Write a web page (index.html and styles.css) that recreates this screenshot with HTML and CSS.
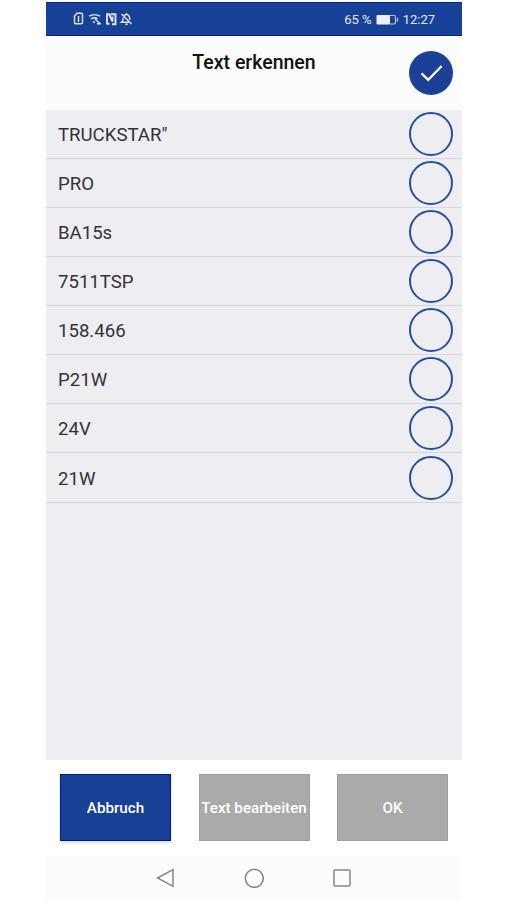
FILE: index.html
```
<!DOCTYPE html>
<html lang="de">
<head>
    <meta charset="UTF-8">
    <meta name="viewport" content="width=device-width, initial-scale=1.0">
    <title>Text erkennen</title>
    <link rel="stylesheet" href="styles.css">
</head>
<body>
    <div class="phone">
        <!-- Status Bar -->
        <div class="status-bar">
            <div class="status-icons">
                <svg width="60" height="14" viewBox="0 0 60 14" fill="none" stroke="#dde5fa" stroke-width="1.4">
                    <path d="M4 1.200h4.200q1.300 0 1.300 1.300v8q0 1.300-1.300 1.300H2.800Q1.500 11.800 1.500 10.500V4zM5.500 4v6"/>
                    <path d="M16 4.200q5.500-3.200 11 0M18 6.800q3.500-2.200 6.500 0M20 9.200l1.700 1.600M22 7l5.500 5M24 11.800h4"/>
                    <path d="M34 12.300V2.200h2L39.500 9.500V4.500M37.500 2.300h5v10h-3.500M33.500 11.800h3" stroke-width="1.900"/>
                    <path d="M48.500 2l10 10M51 3.500q3-2.200 5 .5.800 1.200.8 4M50.500 5.500Q50 9 48.500 10.300h7.500M52.300 12.300h2.400M53.500 1v1.500"/>
                </svg>
            </div>
            <div class="status-info">
                <span>65 %</span>
                <svg width="23" height="12" viewBox="0 0 23 12">
                    <rect x="0.500" y="1" width="13.500" height="9.500" rx="1" fill="#eef1fb"/>
                    <path d="M14 1.500h4q1.500 0 1.500 1.500v5.500q0 1.500-1.500 1.500h-4M21.500 4v3.500" fill="none" stroke="#b9c8ef" stroke-width="1.200"/>
                </svg>
                <span>12:27</span>
            </div>
        </div>

        <!-- Header -->
        <div class="header">
            <h1>Text erkennen</h1>
            <button class="select-all">
                <svg width="44" height="44" viewBox="0 0 44 44">
                    <path d="M12.500 22.300l6.700 6.500 13.500-13.800" fill="none" stroke="#fff" stroke-width="2.300"/>
                </svg>
            </button>
        </div>

        <!-- Recognized Text -->
        <ul class="list">
            <li><span>TRUCKSTAR"</span><i class="circle"></i></li>
            <li><span>PRO</span><i class="circle"></i></li>
            <li><span>BA15s</span><i class="circle"></i></li>
            <li><span>7511TSP</span><i class="circle"></i></li>
            <li><span>158.466</span><i class="circle"></i></li>
            <li><span>P21W</span><i class="circle"></i></li>
            <li><span>24V</span><i class="circle"></i></li>
            <li><span>21W</span><i class="circle"></i></li>
        </ul>

        <!-- Buttons -->
        <div class="actions">
            <button class="btn btn-primary">Abbruch</button>
            <button class="btn">Text bearbeiten</button>
            <button class="btn">OK</button>
        </div>

        <!-- Android Navigation -->
        <div class="nav-bar">
            <svg width="20" height="20" viewBox="0 0 20 20"><path d="M1.500 10L17 1.700v16.600z"/></svg>
            <svg width="20" height="20" viewBox="0 0 20 20"><circle cx="10.300" cy="10.300" r="9"/></svg>
            <svg width="20" height="20" viewBox="0 0 20 20"><rect x="2" y="2" width="16" height="16" rx="1"/></svg>
        </div>
    </div>
</body>
</html>
```
FILE: styles.css
```
/* Global Styles */
body {
    margin: 0;
    background-color: #fff;
    font-family: Roboto, sans-serif;
}

svg {
    display: block;
}

.phone {
    width: 416px;
    height: 900px;
    margin: 0 44px 0 46px;
    box-sizing: border-box;
    padding-top: 2px;
    display: flex;
    flex-direction: column;
}

/* Status Bar */
.status-bar {
    height: 33.5px;
    flex: none;
    box-sizing: border-box;
    padding: 0 27px 0 27px;
    border: solid #0c2486;
    border-width: 1px 0;
    background-color: #174196;
    color: #e4eafa;
    display: flex;
    align-items: center;
    justify-content: space-between;
    font-size: 13px;
}

.status-info {
    display: flex;
    align-items: center;
    gap: 4px;
    padding-top: 2px;
}

/* Header */
.header {
    height: 74px;
    flex: none;
    background-color: #fcfcfc;
    display: grid;
    grid-template-columns: 1fr auto 1fr;
}

.header h1 {
    grid-column: 2;
    margin: 15px 0 0;
    font-size: 19.5px;
    line-height: 24px;
    font-weight: 500;
    color: #111;
}

.select-all {
    justify-self: end;
    width: 44px;
    height: 44px;
    margin: 15px 9px 0 0;
    padding: 0;
    border: none;
    border-radius: 50%;
    background-color: #1c3f97;
}

/* List */
.list {
    flex: 1;
    margin: 0;
    padding: 0;
    list-style: none;
    background-color: #eeedf2;
}

.list li {
    height: 49.15px;
    box-sizing: border-box;
    padding: 0 9px 0 12px;
    border-bottom: 1px solid #d6d6db;
    display: flex;
    align-items: center;
    justify-content: space-between;
    font-size: 18.6px;
    color: #333;
}

.list span {
    padding-top: 2px;
}

.circle {
    width: 44px;
    height: 44px;
    box-sizing: border-box;
    border: 2px solid #2450a0;
    border-radius: 50%;
}

/* Buttons */
.actions {
    height: 96px;
    flex: none;
    box-sizing: border-box;
    padding: 14px 14px 15px;
    display: flex;
    justify-content: space-between;
}

.btn {
    width: 111px;
    height: 67px;
    padding: 0;
    border: 1px solid #9f9f9f;
    background-color: #aaa;
    color: #fff;
    font-family: inherit;
    font-size: 15.2px;
    font-weight: 500;
    white-space: nowrap;
}

.btn-primary {
    border-color: #06148a;
    background-color: #174196;
    box-shadow: 0 2px 3px rgba(0, 0, 0, 0.15);
}

/* Navigation */
.nav-bar {
    height: 44px;
    flex: none;
    background-color: #fcfcfc;
    display: flex;
    align-items: center;
    justify-content: center;
    gap: 68px;
    fill: none;
    stroke: #858585;
    stroke-width: 1.5;
}
```
